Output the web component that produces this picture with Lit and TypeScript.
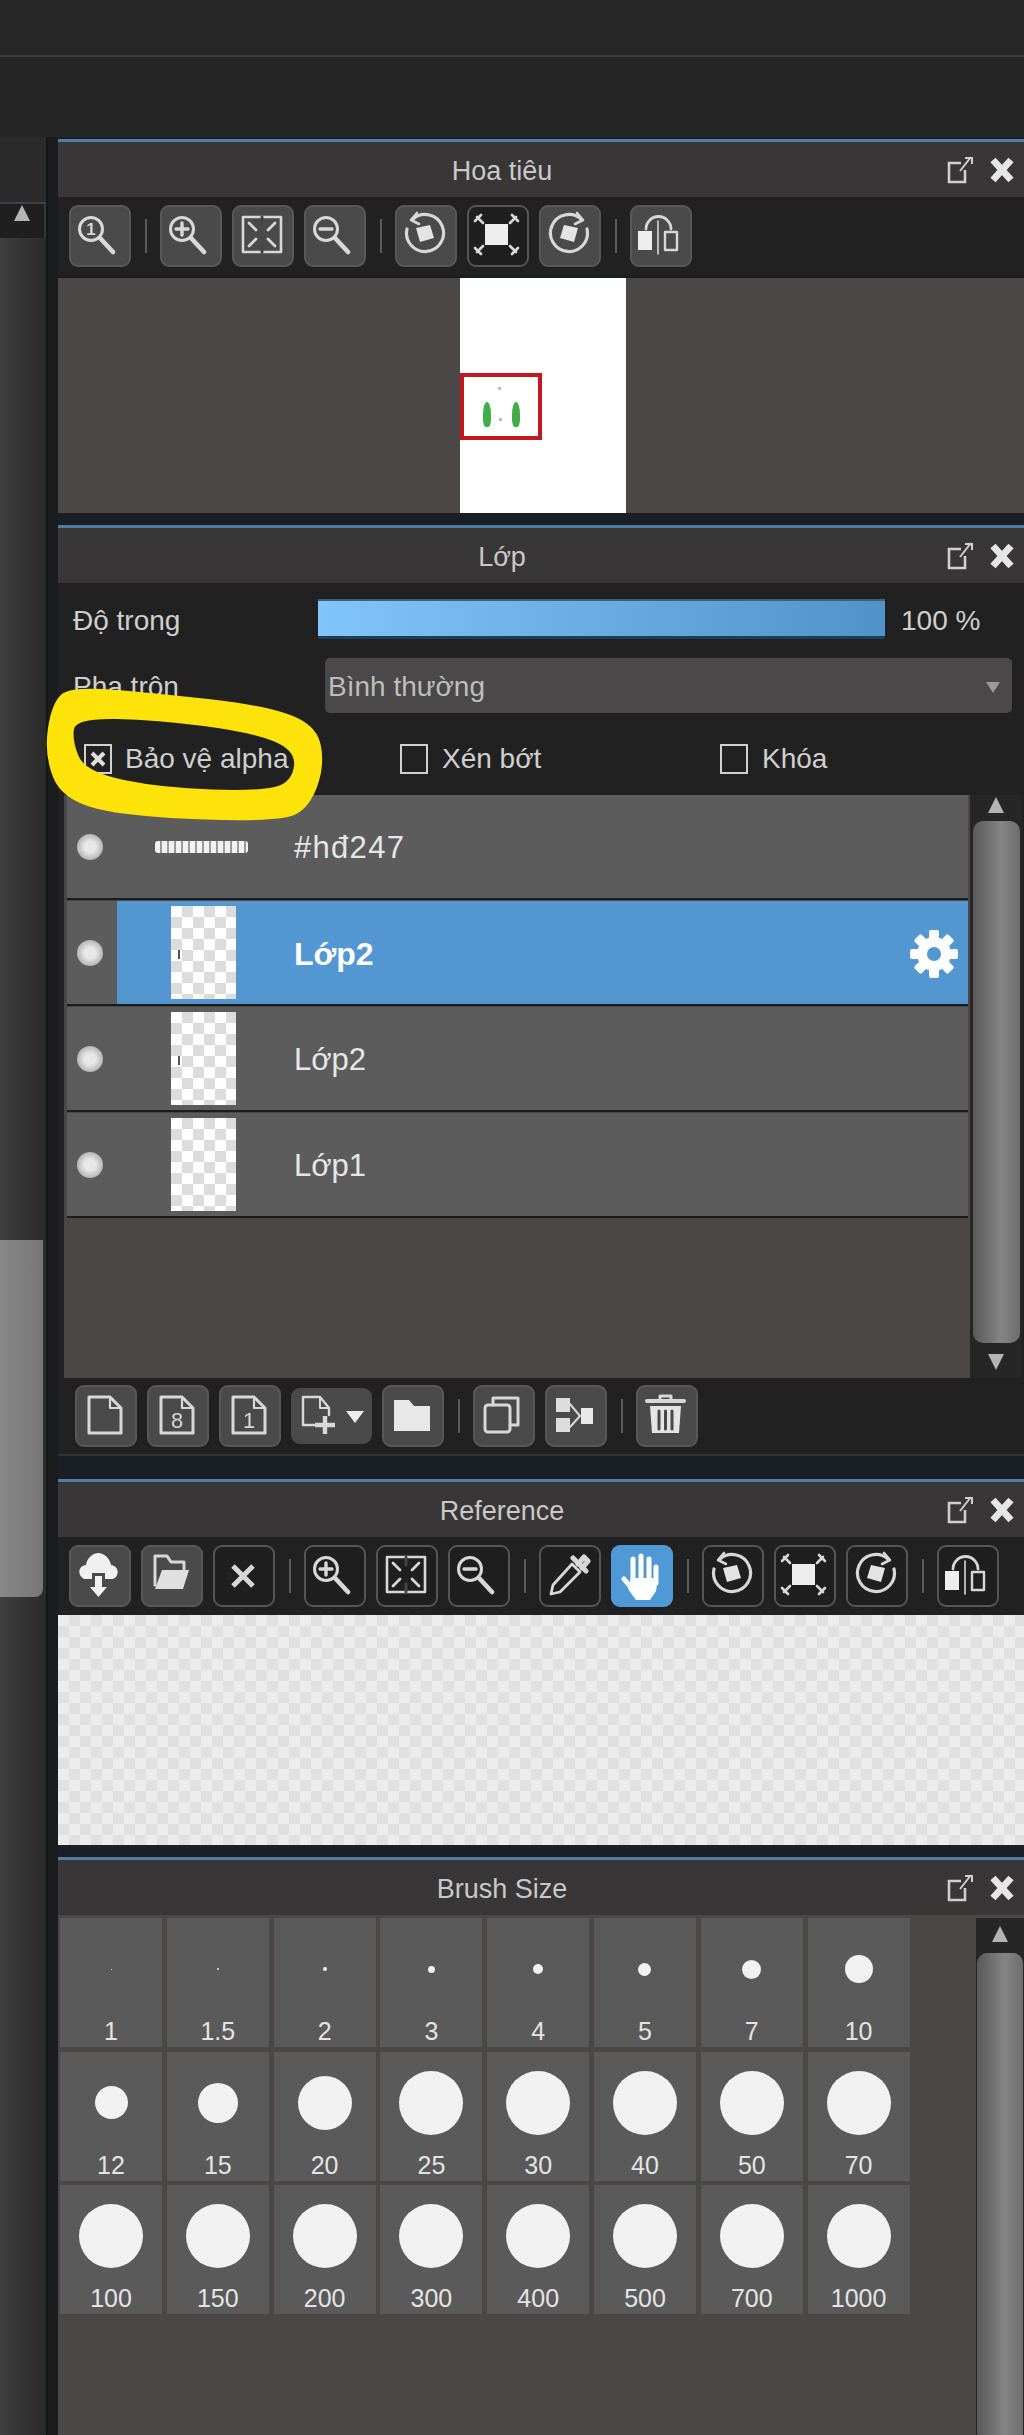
import { LitElement, html, css, svg } from "lit";
import { customElement } from "lit/decorators.js";

const S = (inner: unknown, w = 62, h = 62) =>
  html`<svg width=${w} height=${h} viewBox="0 0 ${w} ${h}" fill="none" stroke="#d8d8d8" stroke-width="3" stroke-linecap="round" stroke-linejoin="round">${inner}</svg>`;

const mag = (inner: unknown) => S(svg`<circle cx="22" cy="24" r="11.5"/><path d="M31 33 L44 47" stroke-width="4.6"/>${inner}`);
const rot = (left: boolean) => S(svg`<g transform=${left ? "" : "translate(60,0) scale(-1,1)"}>
  <path d="M18 14 A18.5 18.5 0 1 1 12 24" stroke-width="3.2"/><path d="M22 8 L16 15 L24 19" stroke-width="2.6"/>
  <path d="M21 23 L35 20 L39 33 L25 37 Z" fill="#e4e4e4" stroke="none"/></g>`);
const doc = (inner: unknown = "") => S(svg`<path d="M14 12 H35 L46 23 V48 H14 Z"/><path d="M35 12 V23 H46" stroke-width="2.2"/>${inner}`);

const ICONS: Record<string, unknown> = {
  zoom1: mag(svg`<text x="22" y="30" text-anchor="middle" font-family="Liberation Sans" font-weight="700" font-size="17" fill="#d8d8d8" stroke="none">1</text>`),
  zoomIn: mag(svg`<path d="M22 18 V30 M16 24 H28" stroke-width="3.4"/>`),
  zoomOut: mag(svg`<path d="M16 24 H28" stroke-width="3.4"/>`),
  fit: S(svg`<rect x="11" y="12" width="38" height="35" stroke-width="2.6"/><path d="M17 18 L24 25 M43 18 L36 25 M17 41 L24 34 M43 41 L36 34" stroke-width="2.8"/><path d="M30 12 V20 M30 39 V47" stroke="#444" stroke-width="3"/>`),
  rotL: rot(true),
  rotR: rot(false),
  center: S(svg`<rect x="18" y="19" width="23" height="21" fill="#eee" stroke="none"/><path d="M16 18 L10 12 M43 18 L49 12 M16 41 L10 47 M43 41 L49 47 M8 16 L14 10 M45 10 L51 16 M8 43 L14 49 M45 49 L51 43" stroke-width="2.6"/>`),
  flip: S(svg`<rect x="8" y="26" width="14" height="19" fill="#eee" stroke="none"/><rect x="35" y="27" width="12" height="18" stroke-width="2.4"/><path d="M16 24 A12.5 12.5 0 0 1 41 24" stroke-width="2.8"/><path d="M28 16 V49" stroke-width="1.6"/>`),
  doc: doc(),
  doc8: doc(svg`<text x="30" y="43" text-anchor="middle" font-family="Liberation Sans" font-size="22" fill="#d8d8d8" stroke="none">8</text>`),
  doc1: doc(svg`<text x="30" y="43" text-anchor="middle" font-family="Liberation Sans" font-size="22" fill="#d8d8d8" stroke="none">1</text>`),
  docPlus: S(svg`<path d="M22 36 H11 V8 H28 L37 19 V26" stroke-width="2.4"/><path d="M28 8 V19 H37" stroke-width="2"/><path d="M33 27 V45 M23 36 H43" stroke-width="4.4" stroke-linecap="butt"/><path d="M54 22 H72 L63 34 Z" fill="#eee" stroke="none"/>`, 79, 54),
  folder: S(svg`<path d="M12 15 H27 L32 21 H48 V46 H12 Z" fill="#e8e8e8" stroke="none"/>`),
  copy: S(svg`<rect x="12" y="20" width="25" height="27" rx="3"/><path d="M20 20 V13 H45 V40 H37"/>`),
  merge: S(svg`<rect x="11" y="13" width="14" height="14" fill="#ddd" stroke="none"/><rect x="11" y="33" width="14" height="14" fill="#ddd" stroke="none"/><rect x="36" y="23" width="12" height="16" fill="#e8e8e8" stroke="none"/><path d="M25 19 L35 31 L25 42" stroke-width="2"/>`),
  trash: S(svg`<path d="M11 16 H48" stroke-width="4"/><path d="M24 15 V11 H35 V15" stroke-width="3"/><path d="M14 21 H45 L43 48 H16 Z" fill="#e4e4e4" stroke="none"/><path d="M23 26 V44 M29.5 26 V44 M36 26 V44" stroke="#484848" stroke-width="3"/>`),
  upload: S(svg`<path d="M15 34 C8 30 9 21 17 20 C18 12 25 8 29 8 C35 8 41 13 42 20 C50 21 51 31 44 34 H36 V28 H23 V34 Z" fill="#f0f0f0" stroke="none"/><path d="M26 31 H33 V42 H38 L29.5 52 L21 42 H26 Z" fill="#f0f0f0" stroke="none"/>`),
  open: S(svg`<path d="M14 40 V11 H26 L30 17 H43 V24" stroke-width="3"/><path d="M14 44 L21 25 H48 L42 44 Z" fill="#e0e0e0" stroke="none"/>`),
  x: S(svg`<path d="M20 21 L40 41 M40 21 L20 41" stroke-width="5" stroke-linecap="butt"/>`),
  dropper: S(svg`<path d="M12 49 L14 40 L33 19 L41 27 L21 47 Z" stroke-width="2.8"/><path d="M34 13 L47 26 M39 19 L45 12 L49 16 L43 23" stroke-width="5"/>`),
  hand: S(svg`<path d="M30 11 V34 M22 14 V35 M38 14 V35 M45 22 V38 M13 34 L23 46" stroke="#fff" stroke-width="5"/><path d="M20 33 H47 L45 46 L39 55 H25 L17 44 Z" fill="#fff" stroke="none"/>`),
};

const teeth = [0, 45, 90, 135].map(
  (a) => svg`<rect x="21" y="2" width="10" height="48" rx="2" fill="#fff" transform="rotate(${a} 26 26)"/>`
);
const gear = html`<svg class="gear" width="52" height="52" viewBox="0 0 52 52">${teeth}<circle cx="26" cy="26" r="17" fill="#fff"/><circle cx="26" cy="26" r="7" fill="#5297d2"/></svg>`;

function smooth(p: number[][]) {
  const mid = (a: number[], b: number[]) => [(a[0] + b[0]) / 2, (a[1] + b[1]) / 2];
  const start = mid(p[p.length - 1], p[0]);
  let d = `M${start[0]} ${start[1]}`;
  p.forEach((pt, i) => {
    const m = mid(pt, p[(i + 1) % p.length]);
    d += ` Q${pt[0]} ${pt[1]} ${m[0]} ${m[1]}`;
  });
  return d + " Z";
}
const outer = [[72,686],[163,694],[262,705],[316,724],[325,764],[310,807],[281,822],[130,817],[62,800],[44,754],[52,702]];
const inner = [[76,718],[157,720],[250,732],[296,750],[292,782],[261,791],[163,788],[85,772],[72,740]];

const T1 = ["zoom1", "|", "zoomIn", "fit", "zoomOut", "|", "rotL", "center:on", "rotR", "|", "flip"];
const T2 = ["doc", "doc8", "doc1", "docPlus:wide", "folder", "|", "copy", "merge", "|", "trash"];
const T3 = ["upload", "open", "x:on", "|", "zoomIn:on", "fit:on", "zoomOut:on", "|", "dropper:on", "hand:blue", "|", "rotL:on", "center:on", "rotR:on", "|", "flip:on"];

const SIZES: [string, number][] = [
  ["1", 1], ["1.5", 2], ["2", 4], ["3", 7], ["4", 10], ["5", 13], ["7", 19], ["10", 28],
  ["12", 33], ["15", 40], ["20", 54], ["25", 64], ["30", 64], ["40", 64], ["50", 64], ["70", 64],
  ["100", 64], ["150", 64], ["200", 64], ["300", 64], ["400", 64], ["500", 64], ["700", 64], ["1000", 64],
];

@customElement("app-root")
export class AppRoot extends LitElement {
  static styles = css`
    :host { display: block; position: relative; width: 1024px; height: 2435px; overflow: hidden; background: #262626;
      font-family: "Liberation Sans", Arial, sans-serif; color: #cfcfcf; }
    .top { height: 55px; background: #272727; }
    .topline { height: 2px; background: #3b3b3b; }
    .sub { height: 80px; background: #262626; }
    .main { display: flex; height: 2298px; }
    .left { width: 46px; display: flex; flex-direction: column; background: #2c2c2c; }
    .leftTop { height: 65px; background: #2b2b2b; border-bottom: 2px solid #3c4448; }
    .leftArrow { height: 34px; display: flex; justify-content: center; align-items: flex-start; padding-top: 1px; box-sizing: border-box; background: #1f1f1f; border-right: 2px solid #33383b; }
    .leftTrack { height: 1002px; background: linear-gradient(90deg, #3f3f3f, #2a2a2a); }
    .leftThumb { height: 357px; width: 43px; border-radius: 0 0 8px 0; background: linear-gradient(90deg, #888, #767676); }
    .leftRest { flex: 1; background: linear-gradient(90deg, #3f3f3f, #2a2a2a); }
    .gutter { width: 12px; background: #1a1c1e; border-left: 2px solid #14171a; box-sizing: border-box; }
    .panels { flex: 1; min-width: 0; background: #1a1f25; padding-top: 2px; display: flex; flex-direction: column; }
    .panel { border-top: 3px solid #4f7da3; display: flex; flex-direction: column; }
    .head { height: 55px; flex: none; display: flex; align-items: center; background: #383636; }
    .title { flex: 1; text-align: center; font-size: 27px; color: #c9c9c9; padding-top: 4px; }
    .headIcons { width: 78px; display: flex; align-items: center; gap: 16px; }
    .toolbar { flex: none; height: 78px; background: #212121; display: flex; align-items: center; gap: 10px; padding-left: 11px; box-sizing: border-box; }
    .btn { width: 62px; height: 62px; flex: none; box-sizing: border-box; border-radius: 9px; background: #4a4a4a; border: 2px solid #585858; display: flex; align-items: center; justify-content: center; }
    .btn svg { flex: none; filter: blur(0.5px); }
    .btn.on { background: #1f1f1f; border-color: #555; }
    .btn.blue { background: #4f9ad6; border-color: #4f9ad6; }
    .btn.wide { width: 81px; height: 56px; border-color: #4a4a4a; }
    .sep { width: 9px; height: 34px; flex: none; display: flex; justify-content: center; }
    .sep i { width: 2px; background: #5a5a5a; display: block; }

    .nav { height: 235px; background: #4b4746; display: flex; padding-left: 402px; margin-top: 3px; }
    .page { width: 166px; height: 235px; background: #fff; position: relative; }
    .view { position: absolute; left: 0; top: 95px; width: 82px; height: 67px; box-sizing: border-box; border: 4px solid #c01a20; }
    .blob { position: absolute; width: 8px; height: 25px; background: #3fae4a; border-radius: 60% 60% 40% 40%; top: 25px; }
    .speck { position: absolute; width: 3px; height: 3px; background: #bbb; }

    .opts { height: 212px; flex: none; background: #212121; position: relative; display: flex; flex-direction: column; box-sizing: border-box; padding-top: 16px; }
    .row { display: flex; align-items: center; font-size: 28px; }
    .row > span { padding-top: 3px; }
    .r1 { height: 40px; padding-left: 15px; }
    .r1 .lab { width: 245px; }
    .slider { width: 567px; height: 40px; box-sizing: border-box; background: linear-gradient(90deg, #80c5fb, #4f93ca); border-top: 2px solid #3c5f7c; border-bottom: 3px solid #1f3c54; }
    .pct { margin-left: 16px; }
    .r2 { height: 55px; margin-top: 19px; padding-left: 15px; }
    .r2 .lab { width: 252px; }
    .select { width: 687px; height: 55px; box-sizing: border-box; padding: 3px 12px 0 3px; background: #4a4848; border-radius: 5px; display: flex; align-items: center; justify-content: space-between; color: #bdbdbd; }
    .caret { width: 0; height: 0; border-left: 7px solid transparent; border-right: 7px solid transparent; border-top: 11px solid #999; }
    .chk { position: absolute; display: flex; align-items: center; gap: 14px; font-size: 28px; bottom: 20px; }
    .chk.a { left: 26px; gap: 13px; } .chk.b { left: 342px; } .chk.c { left: 662px; }
    .box { width: 28px; height: 30px; box-sizing: border-box; border: 2px solid #d0d0d0; display: flex; align-items: center; justify-content: center; }

    .body { height: 583px; flex: none; display: flex; background: #212121; }
    .list { width: 906px; margin-left: 6px; background: #4b4746; display: flex; flex-direction: column; gap: 3px; }
    .layer { height: 103px; flex: none; background: #5c5c5c; display: flex; align-items: center; position: relative; box-shadow: 0 2px 0 #1c1c1c; width: 901px; margin-left: 3px; font-size: 31px; color: #e6e6e6; }
    .eyeCell { width: 50px; height: 100%; display: flex; align-items: center; justify-content: flex-start; padding-left: 10px; box-sizing: border-box; flex: none; }
    .eye { width: 26px; height: 26px; border-radius: 50%; background: radial-gradient(circle at 50% 50%, #e8e8e8 30%, #a8a8a8 80%); }
    .thumbCell { width: 127px; flex: none; display: flex; justify-content: flex-start; padding-left: 54px; box-sizing: border-box; }
    .thumb { width: 65px; height: 93px; background: repeating-conic-gradient(#dcdcdc 0 25%, #fff 0 50%) 0 0 / 22px 22px; position: relative; flex: none; }
    .mark { position: absolute; left: 7px; top: 44px; width: 2px; height: 9px; background: #4a5a52; }
    .stripe { width: 93px; height: 12px; background: repeating-linear-gradient(90deg, #f2f2f2 0 5px, #9a9a9a 5px 7px); border-radius: 3px; flex: none; filter: blur(0.7px); }
    .stripeCell { padding-left: 38px; display: flex; align-items: center; width: 127px; box-sizing: border-box; flex: none; }
    .layer.sel .inner { background: #5297d2; }
    .inner { flex: 1; height: 100%; display: flex; align-items: center; position: relative; min-width: 0; }
    .name { margin-left: 50px; padding-top: 3px; }
    .name.tag { letter-spacing: 1.3px; }
    .layer.sel .name { font-weight: 700; color: #fff; font-size: 32px; }
    .gear { position: absolute; right: 8px; top: 27px; }
    .sb { width: 52px; flex: none; display: flex; flex-direction: column; align-items: center; background: #262626; }
    .up { width: 0; height: 0; border-left: 8px solid transparent; border-right: 8px solid transparent; border-bottom: 16px solid #b4b4b4; }
    .down { width: 0; height: 0; border-left: 8px solid transparent; border-right: 8px solid transparent; border-top: 16px solid #b4b4b4; }
    .sbThumb { width: 47px; border-radius: 10px; background: linear-gradient(90deg, #5a5a5a, #848484 60%, #6e6e6e); }
    .bottom { height: 78px; border-bottom: 2px solid #333; padding-left: 17px; }

    .check { height: 230px; flex: none; background: repeating-conic-gradient(#e0e0e0 0 25%, #ececec 0 50%) 0 0 / 22px 22px; }

    .brush { flex: 1; display: flex; min-height: 0; background: #4b4746; padding-top: 3px; }
    .grid { width: 918px; flex: none; display: grid; grid-template-columns: repeat(8, 102px); grid-auto-rows: 129px; column-gap: 4.8px; row-gap: 4.5px; padding-left: 2px; align-content: start; box-sizing: border-box; }
    .cell { background: #5a5a5a; position: relative; display: flex; flex-direction: column; align-items: center; }
    .dotWrap { height: 102px; width: 100%; display: flex; align-items: center; justify-content: center; flex: none; }
    .dot { border-radius: 50%; background: #f1f1f1; }
    .num { font-size: 25px; color: #e4e4e4; line-height: 28px; margin-top: -3px; }
    .brushSb { width: 48px; display: flex; flex-direction: column; align-items: center; background: #262626; flex: none; }
    .brushSb .up { margin-top: 8px; }
    .brushThumb { width: 46px; flex: 1; margin-top: 11px; border-radius: 10px 10px 0 0; background: linear-gradient(90deg, #585858, #848484 60%, #6e6e6e); }

    .gap12 { margin-top: 12px; }
    .gap23 { margin-top: 23px; }
    .grow { flex: 1; min-height: 0; }
    .sbUp { margin-top: 2px; }
    .sbThumbSize { height: 522px; margin-top: 8px; }
    .sbDown { margin-top: 11px; }
    .ink { position: absolute; left: 0; top: 0; pointer-events: none; }
  `;

  private tb(items: string[]) {
    return items.map((it) => {
      if (it === "|") return html`<span class="sep"><i></i></span>`;
      const [n, k] = it.split(":");
      return html`<span class="btn ${k ?? ""}">${ICONS[n]}</span>`;
    });
  }

  private head(t: string) {
    return html`<div class="head"><div class="title">${t}</div><div class="headIcons">
      <svg width="28" height="30" viewBox="0 0 28 30" fill="none" stroke="#cfcfcf" stroke-width="2.6"><path d="M15 8 H3 V27 H19 V15"/><path d="M14 16 L25 2 M19 3 H26 V9" stroke-width="2"/></svg>
      <svg width="24" height="26" viewBox="0 0 24 26" fill="none" stroke="#e6e6e6" stroke-width="7"><path d="M3 3 L21 23 M21 3 L3 23"/></svg>
    </div></div>`;
  }

  private layer(name: string, opts: { sel?: boolean; stripe?: boolean; mark?: boolean } = {}) {
    return html`<div class="layer ${opts.sel ? "sel" : ""}">
      <div class="eyeCell"><span class="eye"></span></div>
      <div class="inner">
        ${opts.stripe
          ? html`<div class="stripeCell"><span class="stripe"></span></div>`
          : html`<div class="thumbCell"><div class="thumb">${opts.mark ? html`<span class="mark"></span>` : ""}</div></div>`}
        <span class="name ${opts.stripe ? "tag" : ""}">${name}</span>
        ${opts.sel ? gear : ""}
      </div>
    </div>`;
  }

  render() {
    return html`
      <div class="top"></div><div class="topline"></div><div class="sub"></div>
      <div class="main">
        <div class="left">
          <div class="leftTop"></div>
          <div class="leftArrow"><span class="up"></span></div>
          <div class="leftTrack"></div>
          <div class="leftThumb"></div>
          <div class="leftRest"></div>
        </div>
        <div class="gutter"></div>
        <div class="panels">
          <section class="panel">
            ${this.head("Hoa tiêu")}
            <div class="toolbar">${this.tb(T1)}</div>
            <div class="nav"><div class="page">
              <div class="view">
                <span class="blob" style="left:19px"></span><span class="blob" style="left:48px"></span>
                <span class="speck" style="left:34px;top:10px"></span><span class="speck" style="left:35px;top:41px"></span>
              </div>
            </div></div>
          </section>
          <section class="panel gap12">
            ${this.head("Lớp")}
            <div class="opts">
              <div class="row r1"><span class="lab">Độ trong</span><div class="slider"></div><span class="pct">100 %</span></div>
              <div class="row r2"><span class="lab">Pha trộn</span><div class="select"><span>Bình thường</span><span class="caret"></span></div></div>
              <label class="chk a"><span class="box"><svg width="18" height="18" viewBox="0 0 18 18" fill="none" stroke="#e0e0e0" stroke-width="4"><path d="M3 3 L15 15 M15 3 L3 15"/></svg></span>Bảo vệ alpha</label>
              <label class="chk b"><span class="box"></span>Xén bớt</label>
              <label class="chk c"><span class="box"></span>Khóa</label>
            </div>
            <div class="body">
              <div class="list">
                ${this.layer("#hđ247", { stripe: true })}
                ${this.layer("Lớp2", { sel: true, mark: true })}
                ${this.layer("Lớp2", { mark: true })}
                ${this.layer("Lớp1")}
              </div>
              <div class="sb">
                <span class="up sbUp"></span>
                <div class="sbThumb sbThumbSize"></div>
                <span class="down sbDown"></span>
              </div>
            </div>
            <div class="toolbar bottom">${this.tb(T2)}</div>
          </section>
          <section class="panel gap23">
            ${this.head("Reference")}
            <div class="toolbar">${this.tb(T3)}</div>
            <div class="check"></div>
          </section>
          <section class="panel gap12 grow">
            ${this.head("Brush Size")}
            <div class="brush">
              <div class="grid">
                ${SIZES.map(([l, d]) => html`<div class="cell"><div class="dotWrap"><span class="dot" style="width:${d}px;height:${d}px"></span></div><span class="num">${l}</span></div>`)}
              </div>
              <div class="brushSb"><span class="up"></span><div class="brushThumb"></div></div>
            </div>
          </section>
        </div>
      </div>
      <svg class="ink" width="1024" height="900" viewBox="0 0 1024 900"><path fill="#fde30a" fill-rule="evenodd" d="${smooth(outer)} ${smooth(inner)}"/></svg>
    `;
  }
}
